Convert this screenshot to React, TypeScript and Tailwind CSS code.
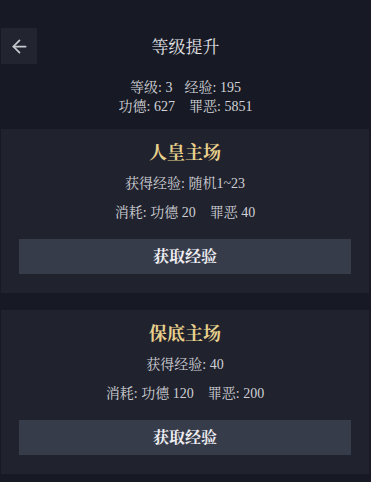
import { ArrowLeft } from "lucide-react"
import { JSX } from "react"

const font = "font-['Liberation_Serif','Noto_Serif_CJK_SC','Noto_Sans_CJK_SC',serif]"

type Mode = {
  title: string
  gain: string
  cost: [string, string]
}

const modes: Mode[] = [
  { title: "人皇主场", gain: "获得经验: 随机1~23", cost: ["消耗: 功德 20", "罪恶 40"] },
  { title: "保底主场", gain: "获得经验: 40", cost: ["消耗: 功德 120", "罪恶: 200"] },
]

function ModeCard({ mode }: { mode: Mode }): JSX.Element {
  return (
    <div className="bg-[#20222d] px-[18px] pt-[11px] pb-[19px] flex flex-col items-center">
      <div className="text-[18px] leading-[26px] font-bold text-[#e8d18c]">{mode.title}</div>
      <div className="mt-[8px] text-[14px] leading-[20px] text-[#cfd0d6]">{mode.gain}</div>
      <div className="mt-[9px] flex gap-[14px] text-[14px] leading-[20px] text-[#cfd0d6]">
        <span>{mode.cost[0]}</span>
        <span>{mode.cost[1]}</span>
      </div>
      <button className="mt-[16px] w-full h-[35px] bg-[#373c4b] text-[16px] text-[#eeeef2] font-bold">
        获取经验
      </button>
    </div>
  )
}

export default function App(): JSX.Element {
  return (
    <div className={`${font} w-[371px] h-[482px] bg-[#171a24] overflow-hidden`}>
      <div className="relative h-[64px] pt-[30px]">
        <button className="absolute left-[1px] top-[28px] w-[36px] h-[36px] bg-[#22242f] flex items-center justify-center">
          <ArrowLeft size={21} strokeWidth={2} color="#c9cad0" />
        </button>
        <div className="text-center text-[17px] leading-[36px] text-[#e4e4e8]">等级提升</div>
      </div>
      <div className="pt-[14px] flex flex-col items-center text-[14px] leading-[19px] text-[#d2d3d8]">
        <div className="flex gap-[12px]">
          <span>等级: 3</span>
          <span>经验: 195</span>
        </div>
        <div className="flex gap-[14px]">
          <span>功德: 627</span>
          <span>罪恶: 5851</span>
        </div>
      </div>
      <div className="mt-[13px] ml-[1px] w-[368px] flex flex-col gap-[17px]">
        {modes.map((m) => (
          <ModeCard key={m.title} mode={m} />
        ))}
      </div>
    </div>
  )
}
